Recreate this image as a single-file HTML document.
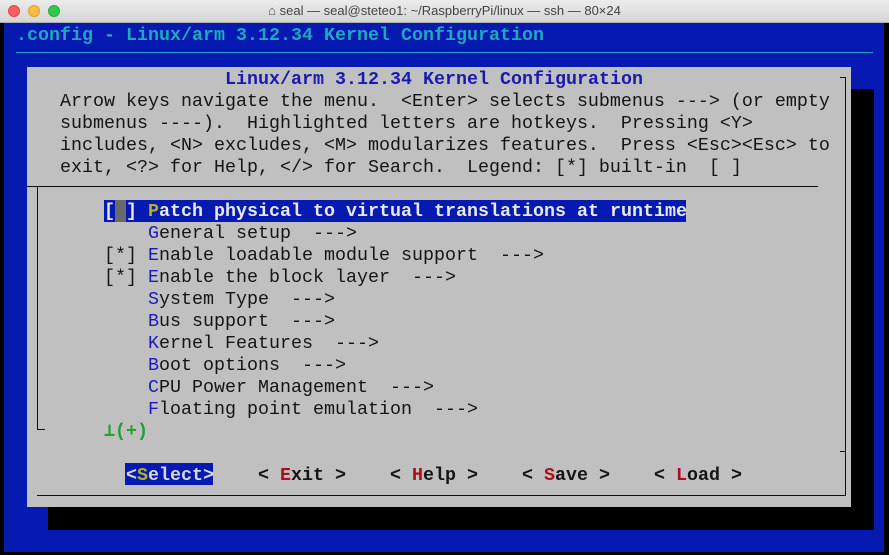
<!DOCTYPE html>
<html><head><meta charset="utf-8"><style>
html,body{margin:0;padding:0}
body{width:889px;height:555px;background:#000;position:relative;overflow:hidden;font-family:"Liberation Mono",monospace;}
#tb{position:absolute;left:0;top:0;width:889px;height:23px;background:linear-gradient(#ececec,#d6d6d6);border-bottom:1px solid #b0b0b0;box-sizing:border-box;}
.dot{position:absolute;top:5px;width:12px;height:12px;border-radius:50%;}
#tt{position:absolute;left:0;width:889px;top:3px;text-align:center;font-family:"Liberation Sans",sans-serif;font-size:13px;color:#444;}
#term{position:absolute;left:4px;top:23px;width:880px;height:529px;background:#0619b0;}
.t{position:absolute;white-space:pre;font-size:18.33px;line-height:22px;height:22px;color:#151515;margin-top:1px;}
.b{font-weight:bold}
.box{position:absolute;}
.hk{color:#1a1ac0}
.rk{color:#a8101a}
</style></head><body>
<div id="tb">
<div class="dot" style="left:8px;background:#fc605c;border:1px solid #de4a44;box-sizing:border-box"></div>
<div class="dot" style="left:28px;background:#fdbc40;border:1px solid #dea030;box-sizing:border-box"></div>
<div class="dot" style="left:48px;background:#34c84a;border:1px solid #28a83a;box-sizing:border-box"></div>
<div id="tt">⌂ seal — seal@steteo1: ~/RaspberryPi/linux — ssh — 80×24</div>
</div>
<div id="term"></div>
<div class="t b" style="left:16px;top:24px;color:#20a8bc">.config - Linux/arm 3.12.34 Kernel Configuration</div>
<div class="box" style="left:16px;top:52px;width:857px;height:1px;background:#2aa0d8"></div>
<div class="box" style="left:851px;top:89px;width:23px;height:441px;background:#000"></div>
<div class="box" style="left:48px;top:507px;width:826px;height:23px;background:#000"></div>
<div class="box" style="left:27px;top:67px;width:824px;height:440px;background:#c0c0c0"></div>
<div class="box" style="left:840px;top:77px;width:6px;height:1px;background:#111"></div>
<div class="box" style="left:845px;top:77px;width:1px;height:419px;background:#111"></div>
<div class="box" style="left:37px;top:495px;width:809px;height:1px;background:#111"></div>
<div class="box" style="left:840px;top:451px;width:6px;height:1px;background:#111"></div>
<div class="box" style="left:27px;top:186px;width:791px;height:1px;background:#111"></div>
<div class="box" style="left:37px;top:186px;width:1px;height:244px;background:#111"></div>
<div class="box" style="left:37px;top:429px;width:8px;height:1px;background:#111"></div>
<div class="t b" style="left:225px;top:68px;color:#1a1ab0">Linux/arm 3.12.34 Kernel Configuration</div>
<div class="t" style="left:60px;top:90px">Arrow keys navigate the menu.  &lt;Enter&gt; selects submenus ---&gt; (or empty</div>
<div class="t" style="left:60px;top:112px">submenus ----).  Highlighted letters are hotkeys.  Pressing &lt;Y&gt;</div>
<div class="t" style="left:60px;top:134px">includes, &lt;N&gt; excludes, &lt;M&gt; modularizes features.  Press &lt;Esc&gt;&lt;Esc&gt; to</div>
<div class="t" style="left:60px;top:156px">exit, &lt;?&gt; for Help, &lt;/&gt; for Search.  Legend: [*] built-in  [ ]</div>
<div class="box" style="left:104px;top:200px;width:582px;height:22px;background:#0619b0"></div>
<div class="box" style="left:115px;top:200px;width:11px;height:22px;background:#6a6a6a"></div>
<div class="t b" style="left:104px;top:200px;color:#e8e8e8">[ ] <span style="color:#b8b020">P</span>atch physical to virtual translations at runtime</div>
<div class="t" style="left:104px;top:222px">    <span class="hk">G</span>eneral setup  ---&gt;</div>
<div class="t" style="left:104px;top:244px">[*] <span class="hk">E</span>nable loadable module support  ---&gt;</div>
<div class="t" style="left:104px;top:266px">[*] <span class="hk">E</span>nable the block layer  ---&gt;</div>
<div class="t" style="left:104px;top:288px">    <span class="hk">S</span>ystem Type  ---&gt;</div>
<div class="t" style="left:104px;top:310px">    <span class="hk">B</span>us support  ---&gt;</div>
<div class="t" style="left:104px;top:332px">    <span class="hk">K</span>ernel Features  ---&gt;</div>
<div class="t" style="left:104px;top:354px">    <span class="hk">B</span>oot options  ---&gt;</div>
<div class="t" style="left:104px;top:376px">    <span class="hk">C</span>PU Power Management  ---&gt;</div>
<div class="t" style="left:104px;top:398px">    <span class="hk">F</span>loating point emulation  ---&gt;</div>
<div class="t b" style="left:104px;top:420px;color:#22a030">⊥(+)</div>
<div class="box" style="left:125px;top:463px;width:88px;height:22px;background:#0619b0"></div>
<div class="t b" style="left:126px;top:464px;color:#d8d8d8">&lt;<span style="color:#b8b020">S</span>elect&gt;</div>
<div class="t b" style="left:258px;top:464px">&lt; <span class="rk">E</span>xit &gt;</div>
<div class="t b" style="left:390px;top:464px">&lt; <span class="rk">H</span>elp &gt;</div>
<div class="t b" style="left:522px;top:464px">&lt; <span class="rk">S</span>ave &gt;</div>
<div class="t b" style="left:654px;top:464px">&lt; <span class="rk">L</span>oad &gt;</div>
</body></html>
